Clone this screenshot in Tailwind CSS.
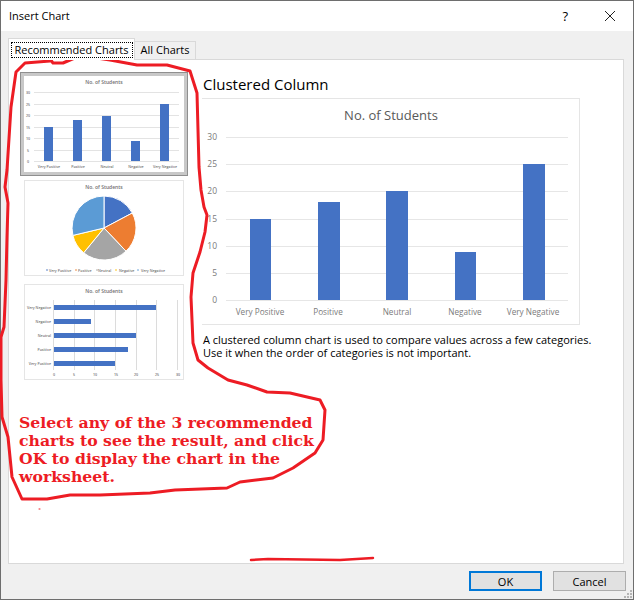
<!DOCTYPE html>
<html lang="en">
<head>
  <meta charset="UTF-8">
  <title>Insert Chart</title>
  <script src="https://cdn.jsdelivr.net/npm/@tailwindcss/browser@4"></script>
</head>
<body class="bg-white">
  <div class="relative w-[634px] h-[600px] flex flex-col border border-[#6e6e6e] bg-[#f0f0f0] font-['Open_Sans',sans-serif] text-black">

    <!-- Title bar -->
    <header class="h-[30px] bg-white flex items-center justify-between pl-2 pr-[17px] shrink-0">
      <span class="text-[11px]">Insert Chart</span>
      <div class="flex items-center gap-[36px]">
        <span class="text-[13px] leading-none">?</span>
        <svg width="12" height="12" viewBox="0 0 12 12"><path d="M1 1 L11 11 M11 1 L1 11" stroke="#222" fill="none"/></svg>
      </div>
    </header>

    <!-- Tabs -->
    <div class="flex items-end pl-[7px] h-[28px] shrink-0">
      <div class="relative z-10 w-[127px] h-[22px] -mb-px bg-white border border-b-0 border-[#d9d9d9] flex items-center justify-center">
        <span class="w-[122px] h-[16px] border border-dotted border-black text-[11px] leading-[14px] text-center whitespace-nowrap">Recommended Charts</span>
      </div>
      <div class="w-[61px] h-[18px] bg-[#f0f0f0] border border-l-0 border-b-0 border-[#d9d9d9] text-[11px] flex items-center justify-center">All Charts</div>
    </div>

    <!-- Panel -->
    <main class="ml-[7px] mr-[9px] h-[505px] bg-white border border-[#d9d9d9] flex shrink-0">
      <!-- Thumbnails -->
      <div class="w-[193px] pl-[11px] pt-[12px] shrink-0 flex flex-col">
        <div class="w-[168px] h-[104px] border border-[#8f8f8f] bg-white p-[3px] shadow-[inset_0_0_0_3px_#c8c8c8]">
          <svg width="160" height="96" viewBox="0 0 160 96" class="block" font-family="Open Sans" fill="#6f6f6f">
            <text x="80" y="8" font-size="5" font-weight="600" text-anchor="middle">No. of Students</text>
            <path stroke="#e3e3e3" d="M10 16.5H155M10 28.5H155M10 39.5H155M10 51.5H155M10 62.5H155M10 74.5H155M10 85.5H155"/>
            <g fill="#4472c4">
              <rect x="20" y="51" width="9" height="34"/>
              <rect x="49" y="44" width="9" height="41"/>
              <rect x="78" y="40" width="9" height="45"/>
              <rect x="107" y="65" width="9" height="20"/>
              <rect x="136" y="28" width="9" height="57"/>
            </g>
            <g font-size="3.6" font-weight="600" text-anchor="middle">
              <text x="4" y="18">30</text><text x="4" y="30">25</text><text x="4" y="41">20</text><text x="4" y="53">15</text><text x="4" y="64">10</text><text x="4" y="76">5</text><text x="4" y="87">0</text>
              <text x="25" y="92">Very Positive</text><text x="54" y="92">Positive</text><text x="83" y="92">Neutral</text><text x="112" y="92">Negative</text><text x="141" y="92">Very Negative</text>
            </g>
          </svg>
        </div>
        <div class="w-[160px] h-[96px] ml-1 mt-[4px] border border-[#e5e5e5]">
          <svg width="158" height="94" viewBox="0 0 158 94" class="block" font-family="Open Sans" fill="#6f6f6f">
            <text x="79" y="8" font-size="5" font-weight="600" text-anchor="middle">No. of Students</text>
            <g stroke="#fff" transform="translate(-1 0)">
              <path fill="#4472c4" d="M80 47 V15 A32 32 0 0 1 108.3 32 Z"/>
              <path fill="#ed7d31" d="M80 47 L108.3 32 A32 32 0 0 1 102 70.2 Z"/>
              <path fill="#a5a5a5" d="M80 47 L102 70.2 A32 32 0 0 1 59.7 71.8 Z"/>
              <path fill="#ffc000" d="M80 47 L59.7 71.8 A32 32 0 0 1 48.9 54.4 Z"/>
              <path fill="#5b9bd5" d="M80 47 L48.9 54.4 A32 32 0 0 1 80 15 Z"/>
            </g>
            <g font-size="3.6" font-weight="600">
              <circle cx="22" cy="89" r="0.8" fill="#4472c4"/><text x="24" y="90.5">Very Positive</text>
              <circle cx="51" cy="89" r="0.8" fill="#ed7d31"/><text x="53" y="90.5">Positive</text>
              <circle cx="72" cy="89" r="0.8" fill="#a5a5a5"/><text x="73" y="90.5">Neutral</text>
              <circle cx="91" cy="89" r="0.8" fill="#ffc000"/><text x="94" y="90.5">Negative</text>
              <circle cx="113" cy="89" r="0.8" fill="#5b9bd5"/><text x="116" y="90.5">Very Negative</text>
            </g>
          </svg>
        </div>
        <div class="w-[160px] h-[96px] ml-1 mt-[8px] border border-[#e5e5e5]">
          <svg width="158" height="94" viewBox="0 0 158 94" class="block" font-family="Open Sans" fill="#6f6f6f">
            <text x="79" y="8" font-size="5" font-weight="600" text-anchor="middle">No. of Students</text>
            <path stroke="#dcdcdc" d="M28.5 15V85M49.5 15V85M69.5 15V85M90.5 15V85M111.5 15V85M152.5 15V85M131.5 15V85"/>
            <g fill="#4472c4">
              <rect x="29" y="20" width="102" height="5"/>
              <rect x="29" y="34" width="37" height="5"/>
              <rect x="29" y="48" width="82" height="5"/>
              <rect x="29" y="62" width="74" height="5"/>
              <rect x="29" y="76" width="61" height="5"/>
            </g>
            <g font-size="3.6" font-weight="600" text-anchor="end">
              <text x="26" y="24">Very Negative</text><text x="26" y="38">Negative</text><text x="26" y="52">Neutral</text><text x="26" y="66">Positive</text><text x="26" y="80">Very Positive</text>
            </g>
            <g font-size="3.6" font-weight="600" text-anchor="middle">
              <text x="29" y="91">0</text><text x="49" y="91">5</text><text x="70" y="91">10</text><text x="91" y="91">15</text><text x="111" y="91">20</text><text x="132" y="91">25</text><text x="153" y="91">30</text>
            </g>
          </svg>
        </div>
      </div>

      <!-- Preview -->
      <div class="pt-[13px]">
        <h2 class="text-[15px] leading-[22px] ml-px">Clustered Column</h2>
        <div class="w-[378px] h-[227px] mt-[3px] border border-l-0 border-[#e5e5e5]">
          <svg width="377" height="225" viewBox="0 0 377 225" class="block" font-family="Open Sans" fill="#7b7b7b">
            <text x="189" y="21" font-size="13" fill="#595959" text-anchor="middle">No. of Students</text>
            <path stroke="#e6e6e6" d="M24 38.5H366M24 65.5H366M24 92.5H366M24 120.5H366M24 147.5H366M24 174.5H366M24 201.5H366"/>
            <g fill="#4472c4">
              <rect x="48" y="120" width="21" height="81"/>
              <rect x="116" y="103" width="22" height="98"/>
              <rect x="184" y="92" width="22" height="109"/>
              <rect x="253" y="153" width="21" height="48"/>
              <rect x="321" y="65" width="22" height="136"/>
            </g>
            <g font-size="8.5" text-anchor="end">
              <text x="15" y="41">30</text><text x="15" y="68">25</text><text x="15" y="95">20</text><text x="15" y="123">15</text><text x="15" y="150">10</text><text x="15" y="177">5</text><text x="15" y="204">0</text>
            </g>
            <g font-size="8.2" text-anchor="middle">
              <text x="58" y="216">Very Positive</text><text x="126" y="216">Positive</text><text x="195" y="216">Neutral</text><text x="263" y="216">Negative</text><text x="331" y="216">Very Negative</text>
            </g>
          </svg>
        </div>
        <p class="text-[11px] leading-[13px] ml-px mt-[8px] whitespace-nowrap">A clustered column chart is used to compare values across a few categories.<br>Use it when the order of categories is not important.</p>
      </div>
    </main>

    <!-- Buttons -->
    <footer class="flex justify-end gap-[11px] pr-[7px] pt-[7px]">
      <button class="w-[73px] h-[20px] bg-[#e1e1e1] border-2 border-[#0078d7] text-[11px] leading-none">OK</button>
      <button class="w-[73px] h-[20px] bg-[#e1e1e1] border border-[#adadad] text-[11px] leading-none">Cancel</button>
    </footer>

    <!-- Resize grip -->
    <svg class="absolute right-0 bottom-0" width="11" height="11" viewBox="0 0 11 11" fill="#b5b5b5">
      <rect x="8" y="2" width="2" height="2"/><rect x="5" y="5" width="2" height="2"/><rect x="8" y="5" width="2" height="2"/><rect x="2" y="8" width="2" height="2"/><rect x="5" y="8" width="2" height="2"/><rect x="8" y="8" width="2" height="2"/>
    </svg>

    <!-- Hand drawn annotation on top of the dialog -->
    <svg class="absolute -left-px -top-px pointer-events-none" width="636" height="604" viewBox="0 0 636 604" fill="none" stroke="#ed1c24" stroke-width="3" stroke-linejoin="round" stroke-linecap="round">
      <path d="M50 59 L53 63 L63 63 L77 57 L90 57 L110 60 L137 65 L167 65 L190 71 L197 93 L199 167 L201 190 L204 207 L207 215 L205 232 L200 252 L193 273 L191 297 L193 343 L198 360 L208 368 L228 380 L247 385 L267 392 L290 393 L320 400 L325 410 L323 440 L315 453 L293 468 L273 478 L240 482 L227 488 L175 490 L150 493 L100 495 L70 495 L47 499 L22 499 L12 477 L8 437 L2 417 L1 380 L1 337 L4 327 L6 280 L7 237 L8 203 L5 187 L7 170 L11 107 L16 72 L25 63 L50 61"/>
      <path d="M251 560 L268 559 L340 560 L373 558" stroke-width="2.5"/>
      <path d="M39 509 h1" stroke-width="1"/>
    </svg>
    <p class="absolute left-[18px] top-[413px] text-[15.7px] leading-[18px] font-bold whitespace-nowrap text-[#ed1c24] font-['DejaVu_Serif',serif]">Select any of the 3 recommended<br>charts to see the result, and click<br>OK to display the chart in the<br>worksheet.</p>
  </div>
</body>
</html>
